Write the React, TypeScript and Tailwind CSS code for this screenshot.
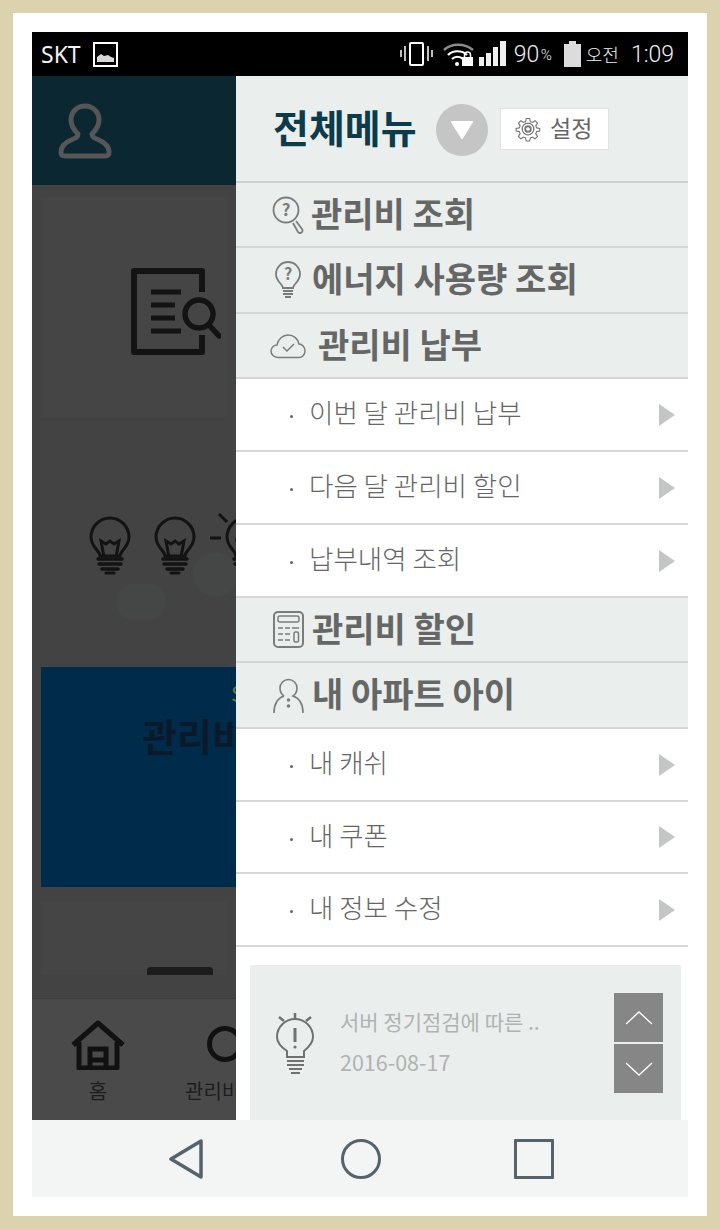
import React from "react";

const kr = { fontFamily: '"Noto Sans CJK KR", "Noto Sans", sans-serif' };
const rob = { fontFamily: 'Roboto, "Noto Sans", sans-serif' };

function Bulb({ rays = false }: { rays?: boolean }) {
  return (
    <svg width="42" height="58" viewBox="0 0 42 58" fill="none" stroke="#131313" className="shrink-0 overflow-visible">
      {rays && <path d="M-15 21h11M-6 -3l8 8" strokeWidth="3" />}
      <path d="M11 39c0-5-9-9-9-19a19 19 0 0 1 38 0c0 10-9 14-9 19z" strokeWidth="3" />
      <path d="M15 40l-3-16 5 3 4-3 4 3 5-3-3 16" strokeWidth="3" />
      <path d="M9 42h24M10 47h22M13 52h16" strokeWidth="3.5" strokeLinecap="round" />
      <path d="M17 56h8" strokeWidth="3" strokeLinecap="round" />
    </svg>
  );
}

function Background() {
  return (
    <div className="w-[204px] shrink-0 flex flex-col overflow-hidden bg-[#434343]" style={kr}>
      <div className="h-[109px] shrink-0 bg-[#0a2732] flex items-center pl-[26px]">
        <svg width="54" height="56" viewBox="0 0 54 56" fill="none" stroke="#565656" strokeWidth="5">
          <path d="M27 3c8 0 14 6 14 14 0 7-4 11-7 14 0 3 2 4 7 6 7 3 10 7 10 12 0 3-1 4-4 4H7c-3 0-4-1-4-4 0-5 3-9 10-12 5-2 7-3 7-6-3-3-7-7-7-14C13 9 19 3 27 3z" strokeLinejoin="round" />
        </svg>
      </div>
      <div className="h-[813px] shrink-0 px-[9px] pt-[12px] flex flex-col overflow-hidden">
        <div className="h-[220px] shrink-0 bg-[#454545] flex items-center pl-[90px] pt-[10px]">
          <svg width="90" height="88" viewBox="0 0 90 88" fill="none" stroke="#131313" className="shrink-0">
            <path d="M71 24V3H3v81h68V67" strokeWidth="6" strokeLinejoin="round" />
            <path d="M20 24h30M20 37h24M20 50h24M20 63h30" strokeWidth="5" />
            <circle cx="68" cy="46" r="14" strokeWidth="5.500" />
            <path d="M78 57l10 11" strokeWidth="5.500" strokeLinecap="round" />
          </svg>
        </div>
        <div className="h-[250px] shrink-0 flex gap-[23px] pl-[48px] pt-[100px] relative">
          <div className="absolute left-[75px] top-[167px] w-[50px] h-[36px] rounded-full bg-[#444745]" />
          <div className="absolute left-[152px] top-[135px] w-[45px] h-[45px] rounded-full bg-[#444745]" />
          <Bulb />
          <Bulb />
          <div className="ml-[6px] relative">
            <Bulb rays />
          </div>
        </div>
        <div className="h-[220px] shrink-0 bg-[#012b4a] overflow-hidden w-[195px] whitespace-nowrap">
          <div className="pl-[190px] pt-[10px] text-[22px] leading-[30px] text-[#65773c]">S</div>
          <div className="pl-[101px] text-[38px] leading-[60px] font-bold text-[#0b1a2b] -mt-[2px]">관리비</div>
        </div>
        <div className="h-[73px] mt-[15px] shrink-0 bg-[#454545] relative">
          <div className="absolute left-[106px] bottom-0 w-[66px] h-[8px] rounded-t-[4px] bg-[#1c1c1c]" />
        </div>
      </div>
      <div className="flex-1 bg-[#4a4a4a] flex border-t border-[#3e3e3e]">
        <div className="w-[132px] shrink-0 flex flex-col items-center pt-[21px]">
          <svg width="56" height="50" viewBox="0 0 56 50" fill="none" stroke="#111" strokeWidth="5" className="shrink-0">
            <path d="M3 25L28 3l25 22M9 22v26h38V22" strokeLinejoin="round" />
            <path d="M20 48V29h16v19" />
            <path d="M20 40h16" />
          </svg>
          <span className="text-[20px] leading-[30px] text-[#1d1d1d] mt-[6px]">홈</span>
        </div>
        <div className="flex-1 relative">
          <div className="absolute left-[43px] top-[27px] w-[36px] h-[36px] rounded-full border-[5px] border-[#111]" />
          <span className="absolute left-[21px] top-[77px] text-[20px] leading-[30px] text-[#1d1d1d] whitespace-nowrap">관리비</span>
        </div>
      </div>
    </div>
  );
}

const Sec = ({ icon, label, pl, h = 65 }: { icon: React.ReactNode; label: string; pl: number; h?: number }) => (
  <div className="shrink-0 bg-[#eaeeec] border-b-2 border-[#d3d6d4] flex items-center relative" style={{ height: h }}>
    <div className="w-[36px] ml-[34px] flex justify-center shrink-0">{icon}</div>
    <span className="text-[34px] font-bold text-[#656766] leading-none whitespace-nowrap -translate-y-[2px]" style={{ marginLeft: pl }}>
      {label}
    </span>
  </div>
);

const Sub = ({ label, h = 73 }: { label: string; h?: number }) => (
  <div className="shrink-0 bg-white border-b-2 border-[#d8d8d8] flex items-center" style={{ height: h }}>
    <span className="w-[3px] h-[3px] rounded-full bg-[#666] ml-[54px] mr-[16px] mt-[4px]" />
    <span className="flex-1 text-[26.5px] text-[#666] leading-none whitespace-nowrap font-light -translate-y-[2px]">{label}</span>
    <svg width="17" height="22" viewBox="0 0 17 22" className="mr-[13px]">
      <path d="M1 0l16 11L1 22z" fill="#c4c6c6" />
    </svg>
  </div>
);

const stroke = "#7b7d7c";

function Menu() {
  return (
    <div className="flex-1 min-w-0 flex flex-col bg-white overflow-hidden" style={kr}>
      <div className="h-[107px] shrink-0 bg-[#eaeeec] border-b-2 border-[#ced1cf] flex items-center pl-[37px]">
        <span className="text-[39px] font-bold text-[#0c3c4c] leading-none whitespace-nowrap -translate-y-[2px] w-[143px]">전체메뉴</span>
        <div className="w-[52px] h-[52px] rounded-full bg-[#c4c5c4] ml-[20px] flex items-center justify-center translate-y-[1px]">
          <svg width="24" height="19" viewBox="0 0 24 19"><path d="M2 2h20L12 18z" fill="#fff" stroke="#fff" strokeWidth="2" strokeLinejoin="round" /></svg>
        </div>
        <div className="w-[109px] h-[42px] bg-white border border-[#dfe2e0] ml-[12px] flex items-center pl-[13px] gap-[8px]">
          <svg width="28" height="28" viewBox="0 0 24 24" fill="none" stroke="#777" strokeWidth="1.100">
            <path d="M10.300 2h3.400l.6 3 2 .9 2.600-1.700 2.400 2.400-1.700 2.600.9 2 3 .6v2.400l-3 .6-.9 2 1.700 2.600-2.400 2.400-2.600-1.700-2 .9-.6 3h-3.400l-.6-3-2-.9-2.600 1.700-2.400-2.400 1.700-2.600-.9-2-3-.6v-2.400l3-.6.9-2L2.700 6.600l2.400-2.400 2.600 1.700 2-.9z" transform="translate(1.400 1.200) scale(.88)" />
            <circle cx="12" cy="12" r="5" />
            <circle cx="12" cy="12" r="2.400" strokeWidth="1.600" />
          </svg>
          <span className="text-[23px] text-[#666] leading-none -translate-y-[1px]">설정</span>
        </div>
      </div>
      <Sec
        pl={5}
        icon={
          <svg width="32" height="38" viewBox="0 0 32 38" fill="none" stroke={stroke} strokeWidth="1.800">
            <circle cx="14" cy="14" r="12.500" />
            <path d="M24 25l6 8a2.400 2.400 0 0 1-4 3l-5-9" />
            <text x="14" y="20" textAnchor="middle" fontSize="17" fontWeight="700" fill={stroke} stroke="none">?</text>
          </svg>
        }
        label="관리비 조회"
      />
      <Sec
        pl={6}
        h={66}
        icon={
          <svg width="28" height="38" viewBox="0 0 28 38" fill="none" stroke={stroke} strokeWidth="1.800">
            <path d="M9 27c0-4-7-6-7-14a12 12 0 0 1 24 0c0 8-7 10-7 14z" />
            <path d="M9 30h10M9 33h10M11 36h6" />
            <text x="14" y="19" textAnchor="middle" fontSize="16" fontWeight="700" fill={stroke} stroke="none">?</text>
          </svg>
        }
        label="에너지 사용량 조회"
      />
      <Sec
        pl={12}
        icon={
          <svg width="36" height="26" viewBox="0 0 36 26" fill="none" stroke={stroke} strokeWidth="1.500">
            <path d="M8 24.500c-4 0-7-3-7-6.500s3-6 6-6c1-6 6-10 11-10 6 0 10 4 11 9 3 0 6 3 6 7s-3 6.500-6 6.500z" />
            <path d="M13 14l4 4 7-7" />
          </svg>
        }
        label="관리비 납부"
      />
      <Sub label="이번 달 관리비 납부" />
      <Sub label="다음 달 관리비 할인" />
      <Sub label="납부내역 조회" />
      <Sec
        pl={6}
        icon={
          <svg width="31" height="37" viewBox="0 0 31 37" fill="none" stroke={stroke} strokeWidth="2">
            <rect x="1" y="1" width="29" height="35" rx="4" />
            <rect x="5" y="5" width="21" height="6" rx="2" strokeWidth="1.500" />
            <path d="M5 17h5M12 17h5M19 17h7M5 23h5M12 23h5M5 29h5M12 29h5" strokeWidth="1.600" />
            <rect x="21" y="21" width="4.500" height="10" rx="1.500" strokeWidth="1.500" />
          </svg>
        }
        label="관리비 할인"
      />
      <Sec
        pl={6}
        h={66}
        icon={
          <svg width="31" height="38" viewBox="0 0 31 38" fill="none" stroke={stroke} strokeWidth="1.600">
            <path d="M11 20c-3-2-4-5-4-8a8.500 8.500 0 0 1 17 0c0 3-1 6-4 8 6 2 10 8 10 17M11 20C5 22 1 28 1 37" />
            <circle cx="15.500" cy="24" r="1" fill={stroke} />
            <circle cx="15.500" cy="30" r="1" fill={stroke} />
          </svg>
        }
        label="내 아파트 아이"
      />
      <Sub label="내 캐쉬" />
      <Sub label="내 쿠폰" h={72} />
      <Sub label="내 정보 수정" h={73} />
      <div className="flex-1 pl-[14px] pr-[7px] pt-[18px]">
        <div className="h-[155px] bg-[#eaeeec] flex items-start pl-[26px] pr-[18px] pt-[28px]">
          <svg width="38" height="64" viewBox="0 0 38 64" fill="none" stroke="#6f7270" strokeWidth="2" className="mt-[20px] shrink-0">
            <path d="M19 0v6M3 4l5 4M35 4l-5 4" strokeWidth="2.500" />
            <path d="M11 38C5 34 1 29 1 24a18 18 0 0 1 36 0c0 5-4 10-9 14v6H11z" />
            <path d="M19 15v14" strokeWidth="3" />
            <circle cx="19" cy="34" r="1.600" fill="#6f7270" stroke="none" />
            <path d="M11 48h17M11 52h17M13 56h13M15 60h9" strokeWidth="2" />
          </svg>
          <div className="ml-[26px] flex-1 pt-[13px]">
            <div className="text-[21px] text-[#b1b3b2] leading-[30px] whitespace-nowrap">서버 정기점검에 따른 ..</div>
            <div className="text-[21.500px] text-[#b1b3b2] leading-[30px] mt-[11px] whitespace-nowrap">2016-08-17</div>
          </div>
          <div className="w-[49px] shrink-0 flex flex-col gap-[2px]">
            <div className="h-[49px] bg-[#858685] flex items-center justify-center">
              <svg width="28" height="16" viewBox="0 0 28 16" fill="none" stroke="#fff" strokeWidth="1.300"><path d="M1 14L14 2l13 12" /></svg>
            </div>
            <div className="h-[49px] bg-[#858685] flex items-center justify-center">
              <svg width="28" height="16" viewBox="0 0 28 16" fill="none" stroke="#fff" strokeWidth="1.300"><path d="M1 2l13 12L27 2" /></svg>
            </div>
          </div>
        </div>
      </div>
    </div>
  );
}

function StatusBar() {
  return (
    <div className="h-[44px] shrink-0 bg-black flex items-center pl-[9px] pr-[14px] text-white" style={{ fontFamily: '"Noto Sans", "Noto Sans CJK KR", sans-serif' }}>
      <span className="text-[23px] leading-none text-[#f2f2f2]">SKT</span>
      <svg width="25" height="25" viewBox="0 0 25 25" className="ml-[12px] mt-[1px]">
        <rect x="1" y="1" width="23" height="23" fill="none" stroke="#fff" strokeWidth="2" />
        <path d="M4 20v-5l4-3 3 2 4-1 3 2 3 1v4z" fill="#d8d8d8" />
      </svg>
      <div className="flex-1" />
      <svg width="34" height="26" viewBox="0 0 34 26" fill="none" stroke="#fff" className="mr-[9px]">
        <rect x="10" y="2" width="13" height="22" rx="1" strokeWidth="2" />
        <path d="M1 9v7M5 5v15M28 5v15M32 9v7" strokeWidth="1.500" />
      </svg>
      <svg width="31" height="25" viewBox="0 0 31 25" fill="none" className="mr-[5px]">
        <path d="M1 8C8 1 22 1 30 8" stroke="#8b8b8b" strokeWidth="2.500" />
        <path d="M5 13c5-5 14-5 19 0M9 17c3-3 8-3 11 0" stroke="#fff" strokeWidth="2.200" />
        <circle cx="14" cy="22" r="2" fill="#fff" />
        <rect x="19" y="15" width="11" height="9" fill="#fff" />
        <path d="M21.500 15v-2a3 3 0 0 1 6 0v2" stroke="#fff" strokeWidth="1.500" />
      </svg>
      <svg width="27" height="26" viewBox="0 0 27 26" className="mr-[8px]">
        <path d="M0 16h5v9H0zM7 12h5v13H7zM14 6h5v19h-5zM21 0h6v25h-6z" fill="#f0f0f0" />
      </svg>
      <span className="text-[23px] leading-none font-light text-[#f0f0f0] w-[27px]" style={rob}>90</span>
      <span className="text-[15px] leading-none font-light text-[#f0f0f0] w-[13px] mt-[3px]" style={rob}>%</span>
      <svg width="17" height="26" viewBox="0 0 17 26" className="ml-[10px] mr-[5px]">
        <path d="M5 0h7v3h5v23H0V3h5z" fill="#dcdcdc" />
      </svg>
      <span className="text-[18px] leading-none mr-[12px] text-[#f0f0f0] font-light" style={kr}>오전</span>
      <span className="text-[23px] leading-none font-light text-[#f0f0f0]" style={rob}>1:09</span>
    </div>
  );
}

function NavBar() {
  return (
    <div className="h-[77px] shrink-0 bg-[#f3f4f4] flex items-center">
      <div className="w-[137px]" />
      <svg width="34" height="40" viewBox="0 0 34 40" fill="none" stroke="#56636b" strokeWidth="3.500"><path d="M32 2v36L2 20z" strokeLinejoin="round" /></svg>
      <div className="w-[138px]" />
      <div className="w-[40px] h-[40px] rounded-full border-[3.500px] border-[#56636b] mr-[133px]" />
      <div className="w-[40px] h-[40px] border-[3.500px] border-[#56636b] rounded-[1px]" />
    </div>
  );
}

export default function App() {
  return (
    <div className="w-[720px] h-[1229px] bg-[#dcd2ae] p-[13px] overflow-hidden">
      <div className="w-[694px] h-[1203px] bg-white p-[19px]">
        <div className="w-[656px] h-[1165px] flex flex-col">
          <StatusBar />
          <div className="h-[1044px] shrink-0 flex">
            <Background />
            <Menu />
          </div>
          <NavBar />
        </div>
      </div>
    </div>
  );
}
